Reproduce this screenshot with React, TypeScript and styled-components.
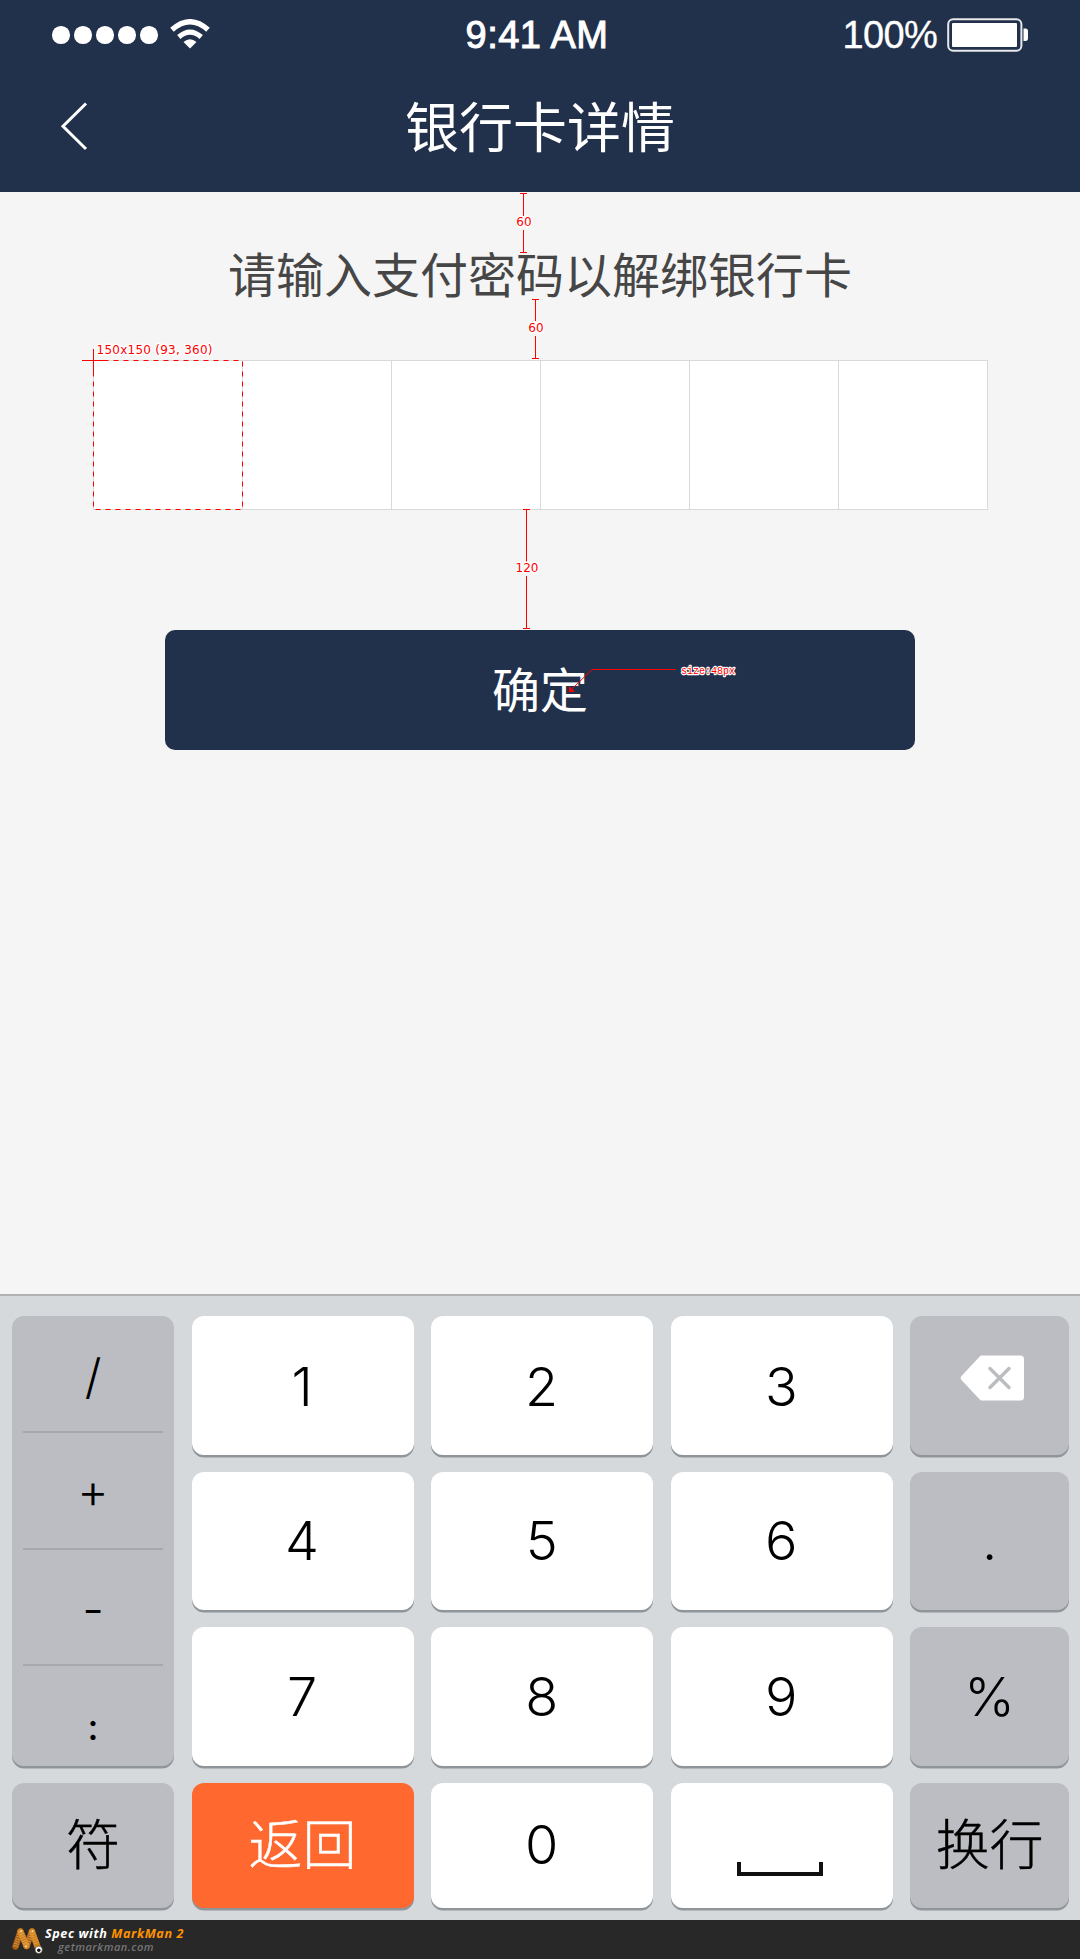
import React from "react";
import styled, { createGlobalStyle } from "styled-components";

const CJK = `"Noto Sans CJK SC", sans-serif`;

const Global = createGlobalStyle`
  *, *::before, *::after { box-sizing: border-box; }
  body { margin: 0; background: #f5f5f5; }
  button { border: 0; padding: 0; margin: 0; font: inherit; }
`;

const Screen = styled.div`
  position: relative;
  width: 1080px;
  height: 1959px;
  display: flex;
  flex-direction: column;
  background: #f5f5f5;
  font-family: ${CJK};
  overflow: hidden;
`;

const Header = styled.header`
  height: 192px;
  background: #22314b;
  color: #fff;
`;

const StatusBar = styled.div`
  height: 69px;
  padding: 1px 51px 0 52px;
  display: grid;
  grid-template-columns: 1fr auto 1fr;
  align-items: center;
  font: 38px/68px "Liberation Sans", Arial, sans-serif;
`;

const Signal = styled.div`
  display: flex;
  align-items: center;
  gap: 4.6px;
`;

const Dot = styled.i`
  width: 17.5px;
  height: 17.5px;
  border-radius: 50%;
  background: #fff;
`;

const WifiIcon = styled.svg`
  margin: -3px 0 0 8px;
`;

const Clock = styled.div`
  padding-right: 7px;
  letter-spacing: 0.5px;
  -webkit-text-stroke: 1px #fff;
`;

const Power = styled.div`
  display: flex;
  align-items: center;
  justify-content: flex-end;
  gap: 10px;
  letter-spacing: -0.7px;
  -webkit-text-stroke: 0.3px #fff;
`;

const NavBar = styled.div`
  height: 123px;
  padding: 0 59px;
  display: grid;
  grid-template-columns: 1fr auto 1fr;
  align-items: start;
`;

const BackButton = styled.button`
  width: 30px;
  height: 50px;
  margin-top: 32px;
  background: none;
`;

const Title = styled.h1`
  margin: 16px 0 0;
  font: 400 54px/80px ${CJK};
`;

const Main = styled.main`
  height: 1102px;
  display: flex;
  flex-direction: column;
  align-items: center;
`;

const Prompt = styled.p`
  margin: 44px 0 0;
  font-size: 48px;
  line-height: 72px;
  color: #464646;
`;

const PinRow = styled.div`
  display: flex;
  width: 895px;
  height: 150px;
  margin: 52px 0 0 1px;
  border: 1px solid #d9d9d9;
  background: #fff;
`;

const PinCell = styled.div`
  flex: 1;
  & + & { border-left: 1px solid #d9d9d9; }
`;

const Confirm = styled.button`
  width: 750px;
  height: 120px;
  margin-top: 120px;
  padding-bottom: 7px;
  border-radius: 10px;
  background: #22314b;
  color: #fff;
  font: 400 48px/112px ${CJK};
`;

const Keyboard = styled.section`
  height: 626px;
  padding: 20px 10px 10px 12px;
  border-top: 2px solid #b1b2b4;
  background: #d5d9dc;
  display: grid;
  grid-template-columns: 162px 222px 222px 222px 158.5px;
  grid-template-rows: 138.5px 138.5px 138.5px 124.5px;
  column-gap: 17.6px;
  row-gap: 17.2px;
  font-family: "Inter", "Noto Sans CJK SC", sans-serif;
`;

type Tone = "light" | "dark" | "accent";
const tones: Record<Tone, string> = { light: "#fff", dark: "#bcbdc2", accent: "#ff682e" };

const Key = styled.button<{ $tone?: Tone; $word?: boolean; $drop?: number }>`
  display: flex;
  align-items: center;
  justify-content: center;
  border-radius: 12px;
  background: ${(p) => tones[p.$tone ?? "light"]};
  color: ${(p) => (p.$tone === "accent" ? "#fff" : "#000")};
  box-shadow: 0 2.5px 0.5px #8f9599;
  font-size: 54px;
  font-weight: 300;
  line-height: 1;
  padding-top: ${(p) => Math.max(p.$drop ?? 0, 0)}px;
  padding-right: ${(p) => (p.$tone ? 0 : 1)}px;
  padding-bottom: ${(p) => Math.max(-(p.$drop ?? 0), 0)}px;
  -webkit-text-stroke: ${(p) => (p.$word ? "0.4px currentColor" : "0")};
`;

const BackspaceIcon = styled.svg`
  margin-left: 5px;
`;

const SymbolColumn = styled.div`
  grid-row: span 3;
  display: flex;
  flex-direction: column;
  padding: 0 11px;
  border-radius: 12px;
  background: #bcbdc2;
  box-shadow: 0 2.5px 0.5px #8f9599;
`;

const SymbolKey = styled.button<{ $drop?: number; $size?: number; $weight?: number }>`
  flex: 0 0 116.7px;
  padding-top: ${(p) => p.$drop ?? 0}px;
  background: none;
  font-size: ${(p) => p.$size ?? 48}px;
  font-weight: ${(p) => p.$weight ?? 300};
  line-height: 1;
  & + & { border-top: 2px solid #a7a8ad; }
  &:first-child { flex-basis: 115px; }
  &:last-child { flex: 1 1 0; }
`;

const Footer = styled.footer`
  height: 39px;
  padding-left: 10px;
  display: flex;
  align-items: flex-start;
  background: #282828;
  font-family: "Open Sans", "Noto Sans", sans-serif;
  font-style: italic;
  font-weight: 700;
`;

const Credits = styled.div`
  display: flex;
  flex-direction: column;
  margin-left: 1px;
`;

const CreditLine = styled.div`
  margin-top: 6px;
  font-size: 12.6px;
  line-height: 15px;
  letter-spacing: 0.6px;
  color: #fff;
  span { color: #ff9200; }
`;

const CreditSite = styled.div`
  margin-left: 13px;
  font-size: 11px;
  line-height: 11px;
  font-weight: 600;
  letter-spacing: 0.5px;
  color: #757575;
`;

const Annotations = styled.svg`
  position: absolute;
  left: 0;
  top: 0;
  pointer-events: none;
  text {
    fill: #f00;
    stroke: #fff;
    stroke-width: 3px;
    stroke-linejoin: round;
    paint-order: stroke;
    font: 12px "DejaVu Sans", Verdana, sans-serif;
  }
  text.mono {
    font: 11.5px "Liberation Mono", monospace;
    stroke-width: 2.4px;
  }
`;

type MeasureProps = { x: number; top: number; bottom: number; gap: [number, number]; labelY: number; label: string };

const Measure = ({ x, top, bottom, gap, labelY, label }: MeasureProps) => (
  <g>
    <path
      d={`M${x - 3} ${top + 0.5}h7M${x + 0.5} ${top}V${gap[0]}M${x + 0.5} ${gap[1]}V${bottom}M${x - 3} ${bottom - 0.5}h7`}
      stroke="#f00"
      fill="none"
    />
    <text x={x + 1} y={labelY} textAnchor="middle">{label}</text>
  </g>
);

const Wifi = () => (
  <WifiIcon width="40" height="30" viewBox="0 0 40 30" fill="none" stroke="#fff">
    <path d="M2 10.8Q20 -5.2 38 10.8" strokeWidth="5.4" />
    <path d="M8.8 18Q20 8.2 31.2 18" strokeWidth="5" />
    <path d="M13.5 23Q20 17.6 26.5 23L20 29.5Z" fill="#fff" stroke="none" />
  </WifiIcon>
);

const Battery = () => (
  <svg width="82" height="34" viewBox="0 0 82 34" fill="none">
    <rect x="1.2" y="1.2" width="73.2" height="31.6" rx="5" stroke="#e6e8ec" strokeWidth="2" />
    <rect x="5" y="5" width="65" height="24" rx="1" fill="#fff" />
    <path d="M76.5 10.5h2q2.5 0 2.5 3v6.5q0 3-2.5 3h-2z" fill="#fff" />
  </svg>
);

const Backspace = () => (
  <BackspaceIcon width="65" height="46" viewBox="0 0 65 46">
    <path d="M22 .5H60.5Q64 .5 64 4V42Q64 45.5 60.5 45.5H22Q20.5 45.5 19.5 44.3L1.5 25Q-.2 23 1.5 21L19.5 1.7Q20.5 .5 22 .5Z" fill="#fff" />
    <path d="M30 13.5L49 32.5M49 13.5L30 32.5" stroke="#bcbdc2" strokeWidth="3.5" strokeLinecap="round" />
  </BackspaceIcon>
);

const Logo = () => (
  <svg width="34" height="37" viewBox="0 0 34 37" fill="none">
    <g strokeLinecap="round" strokeWidth="6.4">
      <path d="M5.5 26.5L10.5 11.5M16.5 26L22 11.5" stroke="#a85f14" />
      <path d="M10.5 11.5L16.5 26M22 11.5L28 28" stroke="#cf7f20" />
    </g>
    <g strokeWidth="5" strokeDasharray="1 1.4" stroke="#eeb058" opacity="0.6">
      <path d="M5.5 26.5L10.5 11.5M10.5 11.5L16.5 26M16.5 26L22 11.5M22 11.5L27 25" />
    </g>
    <circle cx="11" cy="11" r="1" fill="#ffe3a0" />
    <circle cx="22.5" cy="11" r="1" fill="#ffe3a0" />
    <circle cx="16" cy="26.5" r="1" fill="#ffe3a0" />
    <circle cx="28.7" cy="29.8" r="3.7" fill="#fff" stroke="#3a2208" strokeWidth="0.6" />
    <circle cx="28.8" cy="30.2" r="1.7" fill="#111" />
  </svg>
);

export default function App() {
  return (
    <Screen>
      <Global />
      <Header>
        <StatusBar>
          <Signal>
            {[0, 1, 2, 3, 4].map((i) => <Dot key={i} />)}
            <Wifi />
          </Signal>
          <Clock>9:41 AM</Clock>
          <Power>100%<Battery /></Power>
        </StatusBar>
        <NavBar>
          <BackButton aria-label="返回">
            <svg width="30" height="50" viewBox="0 0 30 50" fill="none" stroke="#fff" strokeWidth="3">
              <path d="M27 2.5L4 25.3L27 48" />
            </svg>
          </BackButton>
          <Title>银行卡详情</Title>
        </NavBar>
      </Header>
      <Main>
        <Prompt>请输入支付密码以解绑银行卡</Prompt>
        <PinRow>{[0, 1, 2, 3, 4, 5].map((i) => <PinCell key={i} />)}</PinRow>
        <Confirm>确定</Confirm>
      </Main>
      <Keyboard>
        <SymbolColumn>
          <SymbolKey $drop={7}>/</SymbolKey>
          <SymbolKey $drop={1}>+</SymbolKey>
          <SymbolKey $drop={3}>-</SymbolKey>
          <SymbolKey $drop={22} $size={36} $weight={500}>:</SymbolKey>
        </SymbolColumn>
        <Key $drop={4}>1</Key>
        <Key $drop={4}>2</Key>
        <Key $drop={4}>3</Key>
        <Key $tone="dark" $drop={-14} aria-label="删除"><Backspace /></Key>
        <Key>4</Key>
        <Key>5</Key>
        <Key>6</Key>
        <Key $tone="dark">.</Key>
        <Key>7</Key>
        <Key>8</Key>
        <Key>9</Key>
        <Key $tone="dark">%</Key>
        <Key $tone="dark" $word $drop={2}>符</Key>
        <Key $tone="accent" $word $drop={2}>返回</Key>
        <Key>0</Key>
        <Key $drop={47} aria-label="空格">
          <svg width="88" height="16" viewBox="0 0 88 16" fill="none" stroke="#111" strokeWidth="4">
            <path d="M2 1V13H84V1" />
          </svg>
        </Key>
        <Key $tone="dark" $word $drop={2}>换行</Key>
      </Keyboard>
      <Footer>
        <Logo />
        <Credits>
          <CreditLine>Spec with <span>MarkMan 2</span></CreditLine>
          <CreditSite>getmarkman.com</CreditSite>
        </Credits>
      </Footer>
      <Annotations width="1080" height="760" fill="none">
        <Measure x={523} top={193} bottom={253} gap={[216, 230]} labelY={226} label="60" />
        <Measure x={535} top={299} bottom={359} gap={[321, 336]} labelY={332} label="60" />
        <Measure x={526} top={509} bottom={629} gap={[562, 576]} labelY={572} label="120" />
        <rect x="93.5" y="360.5" width="149" height="149" stroke="#f00" strokeDasharray="5 5" />
        <path d="M82 360.5H108M93.5 349V375" stroke="#f00" />
        <text x="96.5" y="354" textLength="116">150x150 (93, 360)</text>
        <path d="M571 690L592 669.5H676" stroke="#f00" />
        <path d="M569 686v6h6z" fill="#f00" />
        <text className="mono" x="681" y="674" textLength="54" lengthAdjust="spacingAndGlyphs">size:48px</text>
      </Annotations>
    </Screen>
  );
}
